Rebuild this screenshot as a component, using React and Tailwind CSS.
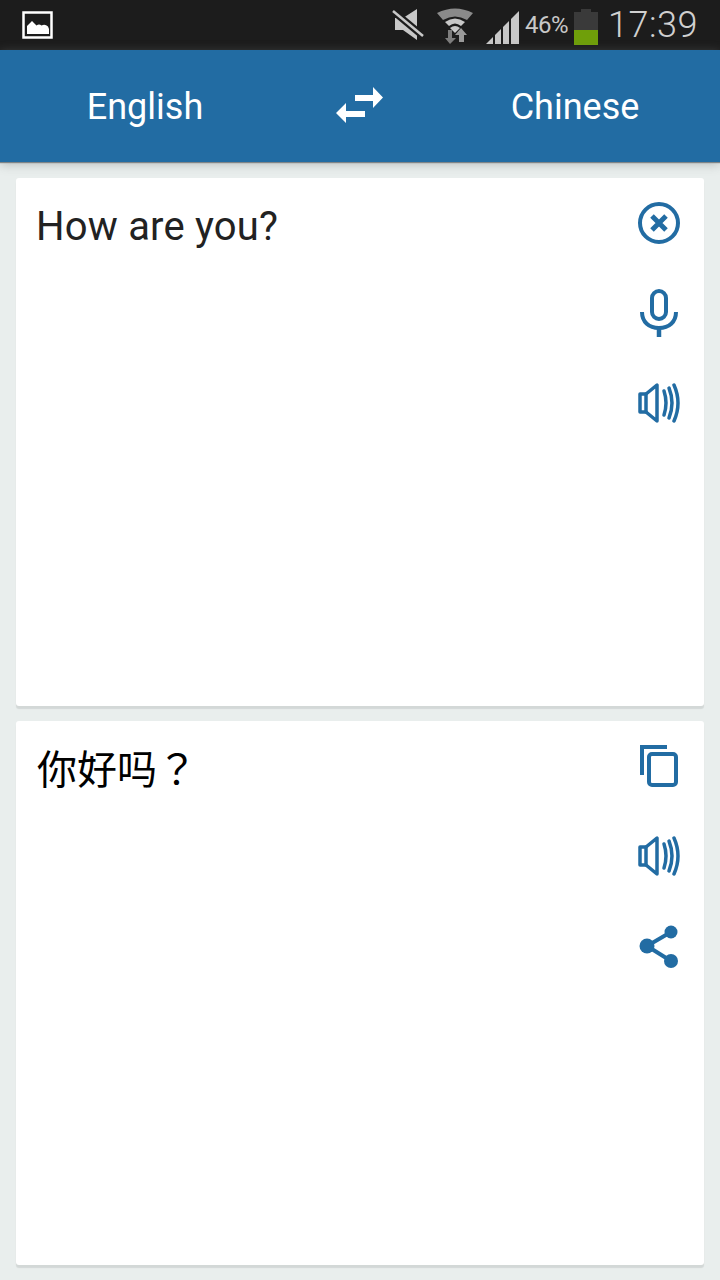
import React from "react";

const BLUE = "#226ca3";

const ImageIcon = () => (
  <svg width="32" height="28" viewBox="0 0 32 28">
    <rect x="1.5" y="1.5" width="28" height="25" fill="none" stroke="#fff" strokeWidth="2.5" />
    <path d="M5 23V15L10 10L14.5 14.5Q17 12.5 19.5 14.5Q23 12.5 26 15.5L27 18V23Z" fill="#fff" />
  </svg>
);

const MuteIcon = () => (
  <svg width="32" height="32" viewBox="0 0 32 32">
    <path d="M3 9H11L25 0V31L11 21H3Z" fill="#c8c8c8" />
    <path d="M1 2L31 27" stroke="#1c1c1c" strokeWidth="7" />
    <path d="M1 2L31 27" stroke="#c8c8c8" strokeWidth="2.5" />
  </svg>
);

const WifiIcon = () => (
  <svg width="36" height="36" viewBox="0 0 36 36">
    <path d="M0 5Q18 -4 36 5L30 12Q18 5 6 12Z" fill="#8a8a8a" />
    <path d="M8 14Q18 7 28 14L24 18Q18 13 12 18Z" fill="#c8c8c8" />
    <path d="M13 20Q18 16 23 20L18 25Z" fill="#c8c8c8" />
    <path d="M11 22H15V30H19L13 36L8 30H11Z" fill="#7d7d7d" />
    <path d="M24 20L30 27H27V34H22V27H18Z" fill="#9a9a9a" />
  </svg>
);

const SignalIcon = () => (
  <svg width="34" height="34" viewBox="0 0 34 34">
    <path d="M0 34L7 27V34Z" fill="#c8c8c8" />
    <path d="M9 25L15 19V34H9Z" fill="#c8c8c8" />
    <path d="M17 17L23 11V34H17Z" fill="#c8c8c8" />
    <path d="M25 9L33 1V34H25Z" fill="#c8c8c8" />
  </svg>
);

const SwapIcon = () => (
  <svg width="48" height="36" viewBox="0 0 48 36">
    <path d="M19 8H37V0L47 10.5L37 21V14H19Z" fill="#fff" />
    <path d="M29 24H10V16L0 26L10 36V30H29Z" fill="#fff" />
  </svg>
);

const CloseIcon = () => (
  <svg width="44" height="44" viewBox="0 0 44 44" fill="none" stroke={BLUE}>
    <circle cx="22" cy="22" r="19" strokeWidth="4" />
    <path d="M15 15L29 29M29 15L15 29" strokeWidth="5" />
  </svg>
);

const MicIcon = () => (
  <svg width="40" height="48" viewBox="0 0 40 48" fill="none" stroke={BLUE}>
    <rect x="13" y="2" width="14" height="28" rx="7" strokeWidth="4" />
    <path d="M3 23C3 33 10 39 20 39C30 39 37 33 37 23" strokeWidth="4" />
    <path d="M20 38V48" strokeWidth="4.5" />
  </svg>
);

const SpeakerIcon = () => (
  <svg width="44" height="42" viewBox="0 0 44 42" fill="none" stroke={BLUE} strokeLinecap="round">
    <path d="M3 12H9L20 3V39L9 30H3Z" strokeWidth="3.5" strokeLinejoin="round" />
    <path d="M9 12V30" strokeWidth="3.5" />
    <path d="M27 9Q31 21 27 33" strokeWidth="3.5" />
    <path d="M32 6Q38 21 32 36" strokeWidth="3.5" />
    <path d="M37 3Q45 21 37 39" strokeWidth="3.5" />
  </svg>
);

const CopyIcon = () => (
  <svg width="40" height="44" viewBox="0 0 40 44" fill="none" stroke={BLUE}>
    <path d="M3 31V3H28" strokeWidth="4" />
    <rect x="10" y="10" width="27" height="31" rx="3" strokeWidth="4" />
  </svg>
);

const ShareIcon = () => (
  <svg width="42" height="44" viewBox="0 0 42 44" fill={BLUE} stroke={BLUE}>
    <path d="M33 8L9 22L33 37" fill="none" strokeWidth="4" />
    <circle cx="33" cy="8" r="6.5" stroke="none" />
    <circle cx="9" cy="22" r="7.5" stroke="none" />
    <circle cx="33" cy="37" r="7" stroke="none" />
  </svg>
);

const IconButton = ({ children }) => (
  <button className="flex h-[90px] w-[90px] items-center justify-center">{children}</button>
);

const Card = ({ height, text, textClass, children }) => (
  <div
    className="flex justify-between rounded-[3px] bg-white shadow-[0_3px_1px_#d3d8d7]"
    style={{ height }}
  >
    <p className={textClass}>{text}</p>
    <div className="flex flex-col">{children}</div>
  </div>
);

export default function App() {
  return (
    <div className="flex h-[1280px] w-[720px] flex-col overflow-hidden bg-[#e9eeed] font-['Roboto',sans-serif]">
      <div className="flex h-[50px] items-center justify-between bg-[#1c1c1c] pl-[22px] pr-[22px]">
        <ImageIcon />
        <div className="flex items-center text-[#c8c8c8]">
          <MuteIcon />
          <div className="ml-[13px] mt-[2px]">
            <WifiIcon />
          </div>
          <div className="ml-[13px] mt-[4px]">
            <SignalIcon />
          </div>
          <span className="ml-[5px] text-[24px] tracking-[-0.5px]">46%</span>
          <div className="ml-[6px] mt-[3px] flex h-[36px] w-[24px] flex-col items-center">
            <div className="h-[3px] w-[10px] bg-[#3a3a3a]" />
            <div className="h-[18px] w-full bg-[#3a3a3a]" />
            <div className="h-[15px] w-full bg-[#6f9f0a]" />
          </div>
          <span className="ml-[10px] text-[36px] font-light leading-none tracking-[0.5px] text-[#d0d0d0]">17:39</span>
        </div>
      </div>

      <div className="relative z-10 flex h-[112px] items-center bg-[#226ca3] pt-[2px] text-[36px] text-white shadow-[0_1px_1px_#7f8587,0_2px_10px_rgba(120,125,125,0.45)]">
        <div className="w-[290px] text-center">English</div>
        <div className="-mt-[4px] flex w-[140px] justify-center">
          <SwapIcon />
        </div>
        <div className="w-[290px] text-center">Chinese</div>
      </div>

      <div className="flex flex-col gap-[15px] px-[16px] pt-[16px]">
        <Card height={528} text="How are you?" textClass="pl-[20px] pt-[24px] text-[40px] leading-[50px] tracking-[0.2px] text-[#222]">
          <IconButton>
            <CloseIcon />
          </IconButton>
          <IconButton>
            <MicIcon />
          </IconButton>
          <IconButton>
            <SpeakerIcon />
          </IconButton>
        </Card>
        <Card
          height={544}
          text="你好吗？"
          textClass="pl-[21px] pt-[21px] font-['Noto_Sans_CJK_TC',sans-serif] text-[40px] leading-[50px] text-black"
        >
          <IconButton>
            <CopyIcon />
          </IconButton>
          <IconButton>
            <SpeakerIcon />
          </IconButton>
          <IconButton>
            <ShareIcon />
          </IconButton>
        </Card>
      </div>
    </div>
  );
}
